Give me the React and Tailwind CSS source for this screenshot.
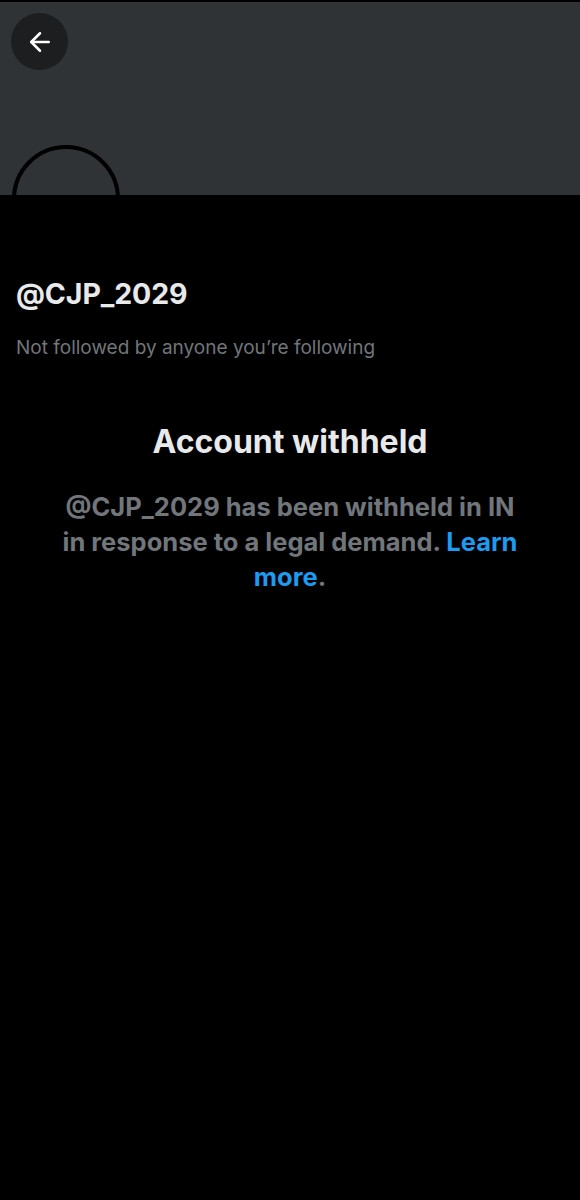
import { ArrowLeft } from "lucide-react";

const font = { fontFamily: "Inter, 'Noto Sans', sans-serif" };

export default function App() {
  return (
    <div className="w-[580px] h-[1200px] bg-black overflow-hidden" style={font}>
      <div className="h-[2px] bg-black" />
      <div className="relative h-[193px] bg-[#2f3336]">
        <button className="absolute left-[11px] top-[11px] w-[57px] h-[57px] rounded-full bg-[#1c1e20] flex items-center justify-center">
          <ArrowLeft className="w-[30px] h-[30px] text-white" strokeWidth={2} />
        </button>
        <div className="absolute left-[12px] top-[143px] w-[108px] h-[108px] rounded-full border-[4px] border-black" />
      </div>
      <div className="bg-black relative">
        <div className="px-[16px] pt-[82px]">
          <h1 className="text-[28.5px] leading-[34px] font-bold text-[#e7e9ea] tracking-[-0.1px]">@CJP_2029</h1>
          <p className="mt-[25px] text-[19px] leading-[24px] text-[#71767b]">
            Not followed by anyone you’re following
          </p>
        </div>
        <div className="mt-[63px] flex flex-col items-center text-center">
          <h2 className="text-[32px] leading-[38px] font-bold text-[#e7e9ea]">Account withheld</h2>
          <p className="mt-[28px] w-[470px] text-[25.5px] leading-[35px] font-bold text-[#71767b]">
            @CJP_2029 has been withheld in IN in response to a legal demand.{" "}
            <span className="text-[#1d9bf0]">Learn more</span>.
          </p>
        </div>
      </div>
    </div>
  );
}
